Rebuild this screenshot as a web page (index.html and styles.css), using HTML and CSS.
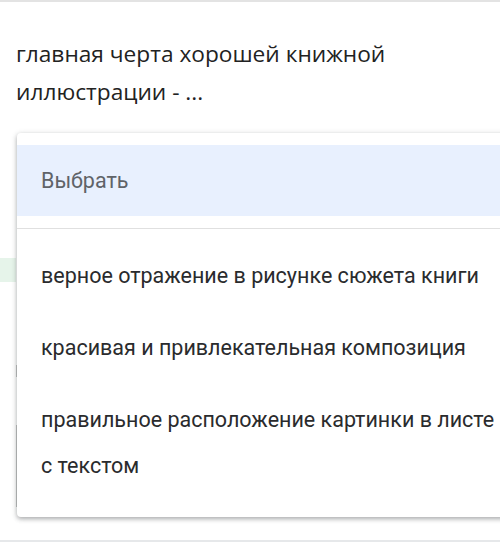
FILE: index.html
```html
<!DOCTYPE html>
<html lang="ru">
<head>
    <meta charset="UTF-8">
    <title>Вопрос</title>
    <link rel="stylesheet" href="styles.css">
</head>
<body>
<div class="page">
    <div class="question">главная черта хорошей книжной иллюстрации - ...</div>

    <div class="behind">
        <div class="correct"></div>
        <div class="field-edge edge-one"></div>
        <div class="field-edge edge-two"></div>
    </div>

    <div class="menu">
        <div class="menu-head">
            <div class="option placeholder">Выбрать</div>
        </div>
        <div class="menu-list">
            <div class="option">верное отражение в рисунке сюжета книги</div>
            <div class="option">красивая и привлекательная композиция</div>
            <div class="option">правильное расположение картинки в листе с текстом</div>
        </div>
    </div>
</div>
</body>
</html>
```

FILE: styles.css
```css
* {
    margin: 0;
    padding: 0;
    box-sizing: border-box;
}

html, body {
    height: 100%;
    overflow: hidden;
    background: #ffffff;
}

.page {
    position: relative;
    height: 542px;
    border-top: 2px solid #e3e3e3;
    border-bottom: 2px solid #e6e8ea;
}

.question {
    padding: 33px 100px 0 16px;
    font-family: "Open Sans", sans-serif;
    font-size: 22.7px;
    line-height: 38px;
    color: #222222;
}

.behind {
    padding-top: 123px;
}

.correct {
    width: 16px;
    height: 24px;
    background: #e6f4ea;
    margin-top: 24px;
}

.field-edge {
    width: 17px;
    border-right: 1px solid #c4c4c4;
}

.edge-one {
    height: 12px;
    margin-top: 83px;
}

.edge-two {
    height: 82px;
    margin-top: 48px;
}

/* dropdown opened over the form */
.menu {
    position: absolute;
    left: 17px;
    top: 131px;
    width: 490px;
    height: 384px;
    background: #ffffff;
    border-radius: 4px;
    box-shadow: 0 2px 4px rgba(60, 64, 67, 0.35), 0 1px 6px rgba(60, 64, 67, 0.15);
    padding-top: 12px;
    font-family: Roboto, sans-serif;
}

.menu-head {
    border-bottom: 1px solid #e0e0e0;
    padding-bottom: 12px;
}

.option {
    padding-left: 24px;
    font-size: 21.5px;
    color: #2a2b2d;
}

.placeholder {
    background: #e8f0fe;
    color: #5f6368;
    height: 71px;
    display: flex;
    align-items: center;
}

.menu-list {
    padding-top: 24px;
}

.menu-list .option {
    line-height: 46px;
    margin-bottom: 26px;
}
```
